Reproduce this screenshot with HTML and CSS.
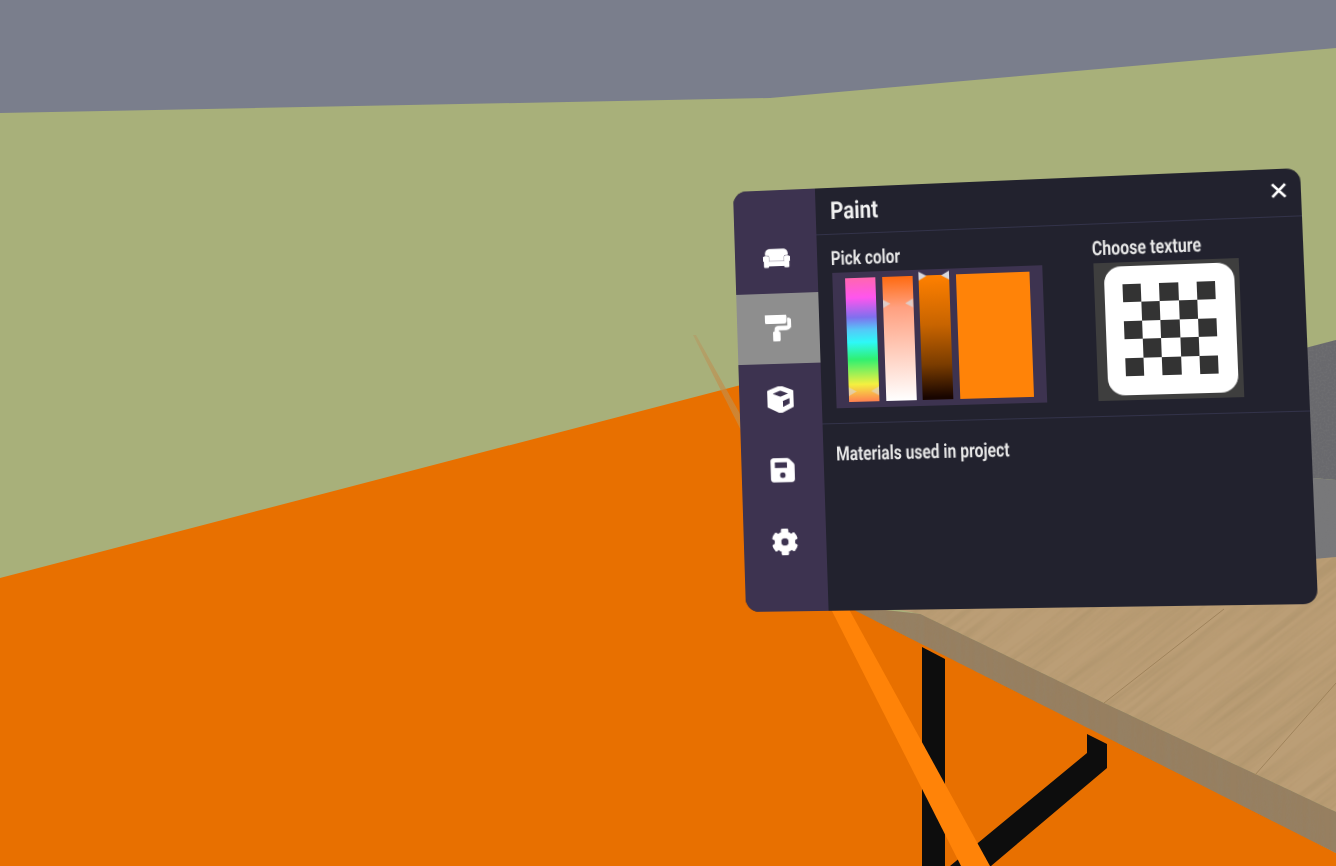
FILE: index.html
```html
<!DOCTYPE html>
<html lang="en">
<head>
<meta charset="utf-8">
<title>Paint</title>
<link rel="stylesheet" href="styles.css">
</head>
<body>
<div class="stage">
  <svg class="scene" viewBox="0 0 1336 866" width="1336" height="866" aria-hidden="true">
    <defs>
      <filter id="grain" x="0" y="0" width="100%" height="100%">
        <feTurbulence type="fractalNoise" baseFrequency="0.007 0.14" numOctaves="3" seed="4" result="n"/>
        <feColorMatrix in="n" type="matrix" values="0 0 0 0 0.40  0 0 0 0 0.28  0 0 0 0 0.14  1.3 0 0 0 -0.48"/>
        <feComposite in2="SourceGraphic" operator="in" result="g"/>
        <feMerge><feMergeNode in="SourceGraphic"/><feMergeNode in="g"/></feMerge>
      </filter>
      <filter id="sidegrain" x="0" y="0" width="100%" height="100%">
        <feTurbulence type="fractalNoise" baseFrequency="0.16 0.006" numOctaves="2" seed="7" result="n"/>
        <feColorMatrix in="n" type="matrix" values="0 0 0 0 0.30  0 0 0 0 0.22  0 0 0 0 0.13  1.8 0 0 0 -0.65"/>
        <feComposite in2="SourceGraphic" operator="in" result="g"/>
        <feMerge><feMergeNode in="SourceGraphic"/><feMergeNode in="g"/></feMerge>
      </filter>
      <filter id="fabric" x="0" y="0" width="100%" height="100%">
        <feTurbulence type="fractalNoise" baseFrequency="0.5" numOctaves="2" seed="2" result="n"/>
        <feColorMatrix in="n" type="matrix" values="0 0 0 0 0.2  0 0 0 0 0.2  0 0 0 0 0.2  0.7 0 0 0 -0.25"/>
        <feComposite in2="SourceGraphic" operator="in" result="g"/>
        <feMerge><feMergeNode in="SourceGraphic"/><feMergeNode in="g"/></feMerge>
      </filter>
      <clipPath id="woodclip"><polygon points="850,600 1336,557 1336,812 1104,703 920,614"/></clipPath>
      <linearGradient id="beamfade" gradientUnits="userSpaceOnUse" x1="693" y1="335" x2="790" y2="510">
        <stop offset="0" stop-color="#b9905a" stop-opacity="0.4"/>
        <stop offset="0.45" stop-color="#c88a40" stop-opacity="0.8"/>
        <stop offset="1" stop-color="#ff8308"/>
      </linearGradient>
    </defs>
    <rect class="s-ceiling" width="1336" height="866"/>
    <polygon class="s-wall" points="0,113 770,98 1336,48 1336,866 0,866"/>
    <polygon class="s-sofa" filter="url(#fabric)" points="1290,352 1336,340 1336,480 1290,476"/>
    <polygon class="s-seat" filter="url(#fabric)" points="1290,476 1336,480 1336,620 1290,620"/>
    <polygon class="s-floor" points="0,578 760,380 860,600 1336,853 1336,866 0,866"/>
    <g clip-path="url(#woodclip)">
      <rect class="s-wood" filter="url(#grain)" x="500" y="500" width="1000" height="800" transform="rotate(-38 1100 700)"/>
    </g>
    <polygon class="s-side" filter="url(#sidegrain)" points="850,606 920,614 1104,703 1336,812 1336,853 856,611"/>
    <line class="s-plank" x1="1104" y1="703" x2="1224" y2="609"/>
    <line class="s-plank" x1="1255" y1="775" x2="1336" y2="683"/>
    <polygon class="s-leg" points="922,647 945,659 945,866 922,866"/>
    <polygon class="s-leg" points="1087,734 1107,744 1107,768 991,866 950,866 1087,753"/>
    <polygon class="s-beam" points="693,335 696,335 850,611 990,866 961,866 832,611"/>
  </svg>

  <section class="panel">
    <nav class="side">
      <a class="side-item">
        <svg class="ico ico-couch" viewBox="0 0 640 512"><path d="M160 224v64h320v-64c0-35.3 28.7-64 64-64h32v-32c0-53-43-96-96-96H160C107 32 64 75 64 128v32h32c35.3 0 64 28.7 64 64zm416-32h-32c-17.7 0-32 14.3-32 32v96H128v-96c0-17.7-14.3-32-32-32H64c-35.3 0-64 28.7-64 64 0 23.6 13 44 32 55.1V432c0 8.8 7.2 16 16 16h64c8.8 0 16-7.2 16-16v-16h384v16c0 8.8 7.2 16 16 16h64c8.8 0 16-7.2 16-16V311.1c19-11.1 32-31.5 32-55.1 0-35.3-28.7-64-64-64z"/></svg>
      </a>
      <a class="side-item is-active">
        <svg class="ico" viewBox="0 0 512 512"><path d="M416 128V32c0-17.67-14.33-32-32-32H32C14.33 0 0 14.33 0 32v96c0 17.67 14.33 32 32 32h352c17.67 0 32-14.33 32-32zm32-64v128c0 17.67-14.33 32-32 32H256c-35.35 0-64 28.65-64 64v32c-17.67 0-32 14.33-32 32v128c0 17.67 14.33 32 32 32h64c17.67 0 32-14.33 32-32V352c0-17.67-14.33-32-32-32v-32h160c53.02 0 96-42.98 96-96v-64c0-35.35-28.65-64-64-64z"/></svg>
      </a>
      <a class="side-item">
        <svg class="ico ico-cube" viewBox="0 0 512 512"><path d="M239.1 6.3l-208 78c-18.7 7-31.1 25-31.1 45v225.1c0 18.2 10.3 34.8 26.5 42.9l208 104c13.5 6.8 29.4 6.8 42.9 0l208-104c16.3-8.1 26.5-24.8 26.5-42.9V129.3c0-20-12.4-37.9-31.1-44.9l-208-78C262 2.2 250 2.2 239.1 6.3zM256 68.4l192 72v1.1l-192 78-192-78v-1.1l192-72zm32 356V275.5l160-65v133.9l-160 80z"/></svg>
      </a>
      <a class="side-item">
        <svg class="ico" viewBox="0 0 448 512"><path d="M433.941 129.941l-83.882-83.882A48 48 0 0 0 316.118 32H48C21.49 32 0 53.49 0 80v352c0 26.51 21.49 48 48 48h352c26.51 0 48-21.49 48-48V163.882a48 48 0 0 0-14.059-33.941zM224 416c-35.346 0-64-28.654-64-64 0-35.346 28.654-64 64-64s64 28.654 64 64c0 35.346-28.654 64-64 64zm96-304.52V212c0 6.627-5.373 12-12 12H76c-6.627 0-12-5.373-12-12V108c0-6.627 5.373-12 12-12h228.52c3.183 0 6.235 1.264 8.485 3.515l3.48 3.48A11.996 11.996 0 0 1 320 111.48z"/></svg>
      </a>
      <a class="side-item">
        <svg class="ico" viewBox="0 0 512 512"><path d="M487.4 315.7l-42.6-24.6c4.3-23.2 4.3-47 0-70.2l42.6-24.6c4.9-2.8 7.1-8.6 5.5-14-11.1-35.6-30-67.8-54.7-94.6-3.8-4.1-10-5.1-14.8-2.3L380.8 110c-17.9-15.4-38.5-27.3-60.8-35.1V25.8c0-5.6-3.9-10.5-9.4-11.7-36.7-8.2-74.3-7.8-109.2 0-5.5 1.2-9.4 6.1-9.4 11.7V75c-22.2 7.9-42.8 19.8-60.8 35.1L88.7 85.5c-4.9-2.8-11-1.9-14.8 2.3-24.7 26.7-43.6 58.9-54.7 94.6-1.7 5.4.6 11.2 5.5 14L67.3 221c-4.3 23.2-4.3 47 0 70.2l-42.6 24.6c-4.9 2.8-7.1 8.6-5.5 14 11.1 35.6 30 67.8 54.7 94.6 3.8 4.1 10 5.1 14.8 2.3l42.6-24.6c17.9 15.4 38.5 27.3 60.8 35.1v49.2c0 5.6 3.9 10.5 9.4 11.7 36.7 8.2 74.3 7.8 109.2 0 5.5-1.2 9.4-6.1 9.4-11.7v-49.2c22.2-7.9 42.8-19.8 60.8-35.1l42.6 24.6c4.9 2.8 11 1.9 14.8-2.3 24.7-26.7 43.6-58.9 54.7-94.6 1.5-5.5-.7-11.3-5.6-14.1zM256 336c-44.1 0-80-35.9-80-80s35.9-80 80-80 80 35.9 80 80-35.9 80-80 80z"/></svg>
      </a>
    </nav>
    <div class="main">
      <header class="head">
        <h1 class="title">Paint</h1>
        <svg class="close" viewBox="0 0 16 16"><path d="M2 2 14 14M14 2 2 14"/></svg>
      </header>
      <div class="tools">
        <div class="pick">
          <h2 class="label">Pick color</h2>
          <div class="picker">
            <div class="strip strip-hue"><i class="mark mark-l mark-hue"></i><i class="mark mark-r mark-hue"></i></div>
            <div class="strip strip-sat"><i class="mark mark-l mark-sat"></i><i class="mark mark-r mark-sat"></i></div>
            <div class="strip strip-val"><i class="mark mark-tl"></i><i class="mark mark-tr"></i></div>
            <div class="swatch"></div>
          </div>
        </div>
        <div class="texture">
          <h2 class="label">Choose texture</h2>
          <div class="tex-box">
            <div class="tile">
              <div class="checker">
                <i></i><b></b><i></i><b></b><i></i>
                <b></b><i></i><b></b><i></i><b></b>
                <i></i><b></b><i></i><b></b><i></i>
                <b></b><i></i><b></b><i></i><b></b>
                <i></i><b></b><i></i><b></b><i></i>
              </div>
            </div>
          </div>
        </div>
      </div>
      <div class="materials">
        <h2 class="label">Materials used in project</h2>
      </div>
    </div>
  </section>
</div>
</body>
</html>
```
FILE: styles.css
```css
* { box-sizing: border-box; }
html, body { margin: 0; padding: 0; }
body { width: 1336px; height: 866px; overflow: hidden; background: #7a7e8c; font-family: Roboto, "Liberation Sans", sans-serif; }

.stage { position: relative; width: 1336px; height: 866px; overflow: hidden; }
.scene { display: block; filter: blur(0.6px); }
.s-ceiling { fill: #7a7e8c; }
.s-wall { fill: #a8b07a; }
.s-sofa { fill: #69696d; }
.s-seat { fill: #78787a; }
.s-floor { fill: #e87000; }
.s-wood { fill: #bb9e76; }
.s-side { fill: #977f60; }
.s-plank { stroke: #a0845c; stroke-width: 1; }
.s-leg { fill: #0d0d0d; }
.s-beam { fill: url(#beamfade); }

/* The panel floats in the 3D scene: the matrix maps its flat 570x430 box onto the four corners seen on screen */
.panel {
  position: absolute; left: 0; top: 0;
  width: 570px; height: 430px;
  display: flex;
  background: #22222e;
  border-radius: 14px;
  overflow: hidden;
  color: #f2f2f2;
  transform-origin: 0 0;
  transform: matrix3d(0.91072, -0.05296, 0, -0.00006462,
                      0.017079, 0.96595, 0, -0.00001763,
                      0, 0, 1, 0,
                      733, 192, 0, 1);
  filter: blur(0.4px);
}

.side { flex: 0 0 85px; background: #3d3350; padding-top: 33px; display: flex; flex-direction: column; }
.side-item { height: 72.5px; display: flex; align-items: center; justify-content: center; }
.side-item.is-active { background: #8e8e8e; }
.ico { width: 27px; height: 27px; fill: #fff; stroke: #fff; stroke-width: 18; stroke-linejoin: round; display: block; }
.ico-couch { width: 28px; height: 23px; stroke-width: 26; margin-top: 2px; }
.ico-cube { stroke-width: 30; }

.main { flex: 1 1 auto; min-width: 0; display: flex; flex-direction: column; }
.head { height: 48px; flex: none; padding: 0 13px 0 15px; display: flex; align-items: center; justify-content: space-between; border-bottom: 1px solid #33334a; }
.title { margin: 0; font-size: 25px; font-weight: 700; line-height: 28px; transform: scaleX(0.84); transform-origin: 0 50%; }
.close { width: 17px; height: 17px; stroke: #fff; stroke-width: 2.6; fill: none; margin-top: -4px; }

.tools { height: 193px; flex: none; display: flex; padding: 13px 0 0 15px; border-bottom: 1px solid #33334a; }
.pick { width: 264px; flex: none; }
.label { margin: 0; font-size: 20px; font-weight: 700; line-height: 22px; color: #e8e8e8; white-space: nowrap; transform: scaleX(0.79); transform-origin: 0 50%; }
.pick .label { margin: 0 0 4px -1.5px; }
.picker { width: 213px; height: 138px; background: #3d3350; padding: 6px 0 6px 13px; display: flex; gap: 6.5px; }
.strip { position: relative; width: 31px; }
.strip-hue { background: linear-gradient(#ff66b0 0%, #ff55ee 16%, #7f70ee 32%, #55c8f8 42%, #2ef8f8 52%, #30f070 66%, #f4f040 86%, #ff8050 100%); }
.strip-sat { background: linear-gradient(#ff6a10 0%, #ffa080 25%, #ffffff 100%); }
.strip-val { background: linear-gradient(#ff8000 0%, #c86400 40%, #7a3c00 72%, #180500 98%); }
.swatch { width: 74px; background: #ff8308; }

.mark { position: absolute; width: 8px; height: 9px; background: #d8d8dc; }
.mark-l { left: 0; clip-path: polygon(0 0, 100% 50%, 0 100%); }
.mark-r { right: 0; clip-path: polygon(100% 0, 0 50%, 100% 100%); }
.mark-hue { top: 111px; opacity: 0.6; }
.mark-sat { top: 23px; opacity: 0.8; }
.mark-tl { left: 0; top: -4px; clip-path: polygon(0 0, 100% 50%, 0 100%); }
.mark-tr { right: 0; top: -4px; clip-path: polygon(100% 0, 0 50%, 100% 100%); }

.texture { width: 143px; flex: none; }
.texture .label { margin: 0 0 4px -1.5px; }
.tex-box { width: 143px; height: 138px; background: #3e3e3e; padding: 4px 0 0 9.5px; }
.tile { width: 128px; height: 129px; background: #fff; border-radius: 17px; padding: 18px 0 0 18px; }
.checker { display: grid; grid-template-columns: repeat(5, 18.4px); grid-auto-rows: 18.4px; }
.checker i { background: #333333; }

.materials { padding: 19px 13px 0; }
```
